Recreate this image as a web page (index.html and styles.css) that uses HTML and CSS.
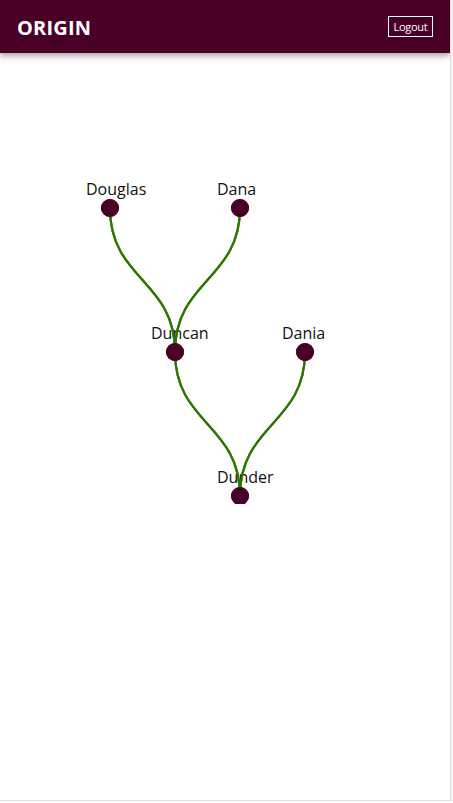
FILE: index.html
```html
<!DOCTYPE html>
<html>
<head>
<meta charset="utf-8">
<link rel="stylesheet" href="styles.css">
</head>
<body>
<div class="frame">
  <header class="topbar">
    <div class="brand">ORIGIN</div>
    <button class="logout">Logout</button>
  </header>
  <main class="content">
    <svg class="tree" width="450" height="451" viewBox="0 53 450 451">
      <g class="links">
        <path d="M110,208 C110,280 175,280 175,352"/>
        <path d="M240,208 C240,280 175,280 175,352"/>
        <path d="M175,352 C175,424 240,424 240,496"/>
        <path d="M305,352 C305,424 240,424 240,496"/>
      </g>
      <g class="nodes">
        <circle cx="110" cy="208" r="9"/>
        <circle cx="240" cy="208" r="9"/>
        <circle cx="175" cy="352" r="9"/>
        <circle cx="305" cy="352" r="9"/>
        <circle cx="240" cy="496" r="9"/>
      </g>
      <g class="labels">
        <text x="86" y="195">Douglas</text>
        <text x="217" y="195">Dana</text>
        <text x="151" y="339">Duncan</text>
        <text x="282" y="339">Dania</text>
        <text x="217" y="483">Dunder</text>
      </g>
      <g class="links over">
        <path d="M110,208 C110,280 175,280 175,352"/>
        <path d="M240,208 C240,280 175,280 175,352"/>
        <path d="M175,352 C175,424 240,424 240,496"/>
        <path d="M305,352 C305,424 240,424 240,496"/>
      </g>
      <g class="nodes">
        <circle cx="110" cy="208" r="9"/>
        <circle cx="240" cy="208" r="9"/>
        <circle cx="175" cy="352" r="9"/>
        <circle cx="305" cy="352" r="9"/>
        <circle cx="240" cy="496" r="9"/>
      </g>
    </svg>
  </main>
</div>
</body>
</html>
```
FILE: styles.css
```css
html, body {
  margin: 0;
  padding: 0;
  background: #ffffff;
}
.frame {
  width: 450px;
  height: 800px;
  border-right: 1px solid #dedede;
  border-bottom: 1px solid #dedede;
  box-shadow: 1px 1px 0 1px #f2f2f2;
  overflow: hidden;
  position: relative;
}
.topbar {
  height: 53px;
  background: #4a0026;
  display: flex;
  align-items: center;
  justify-content: space-between;
  padding: 0 17px 0 17px;
  box-shadow: 0 3px 6px rgba(0, 0, 0, 0.35);
  position: relative;
  z-index: 1;
}
.brand {
  color: #ffffff;
  font-family: "Open Sans", "Noto Sans", sans-serif;
  font-weight: 700;
  font-size: 20px;
  letter-spacing: 0.2px;
  margin-top: 1px;
}
.logout {
  background: transparent;
  color: #ffffff;
  border: 1px solid #ffffff;
  font-family: "Open Sans", "Noto Sans", sans-serif;
  font-size: 11px;
  height: 21px;
  width: 45px;
  padding: 0;
  margin-right: 0;
  letter-spacing: -0.3px;
}
.content {
  display: block;
}
.tree {
  display: block;
}
.links path {
  fill: none;
  stroke: #2b7800;
  stroke-width: 2.2px;
}
.nodes circle {
  fill: #4a0026;
}
.labels text {
  font-family: "Open Sans", "Noto Sans", sans-serif;
  font-size: 16px;
  fill: #111111;
}
```
